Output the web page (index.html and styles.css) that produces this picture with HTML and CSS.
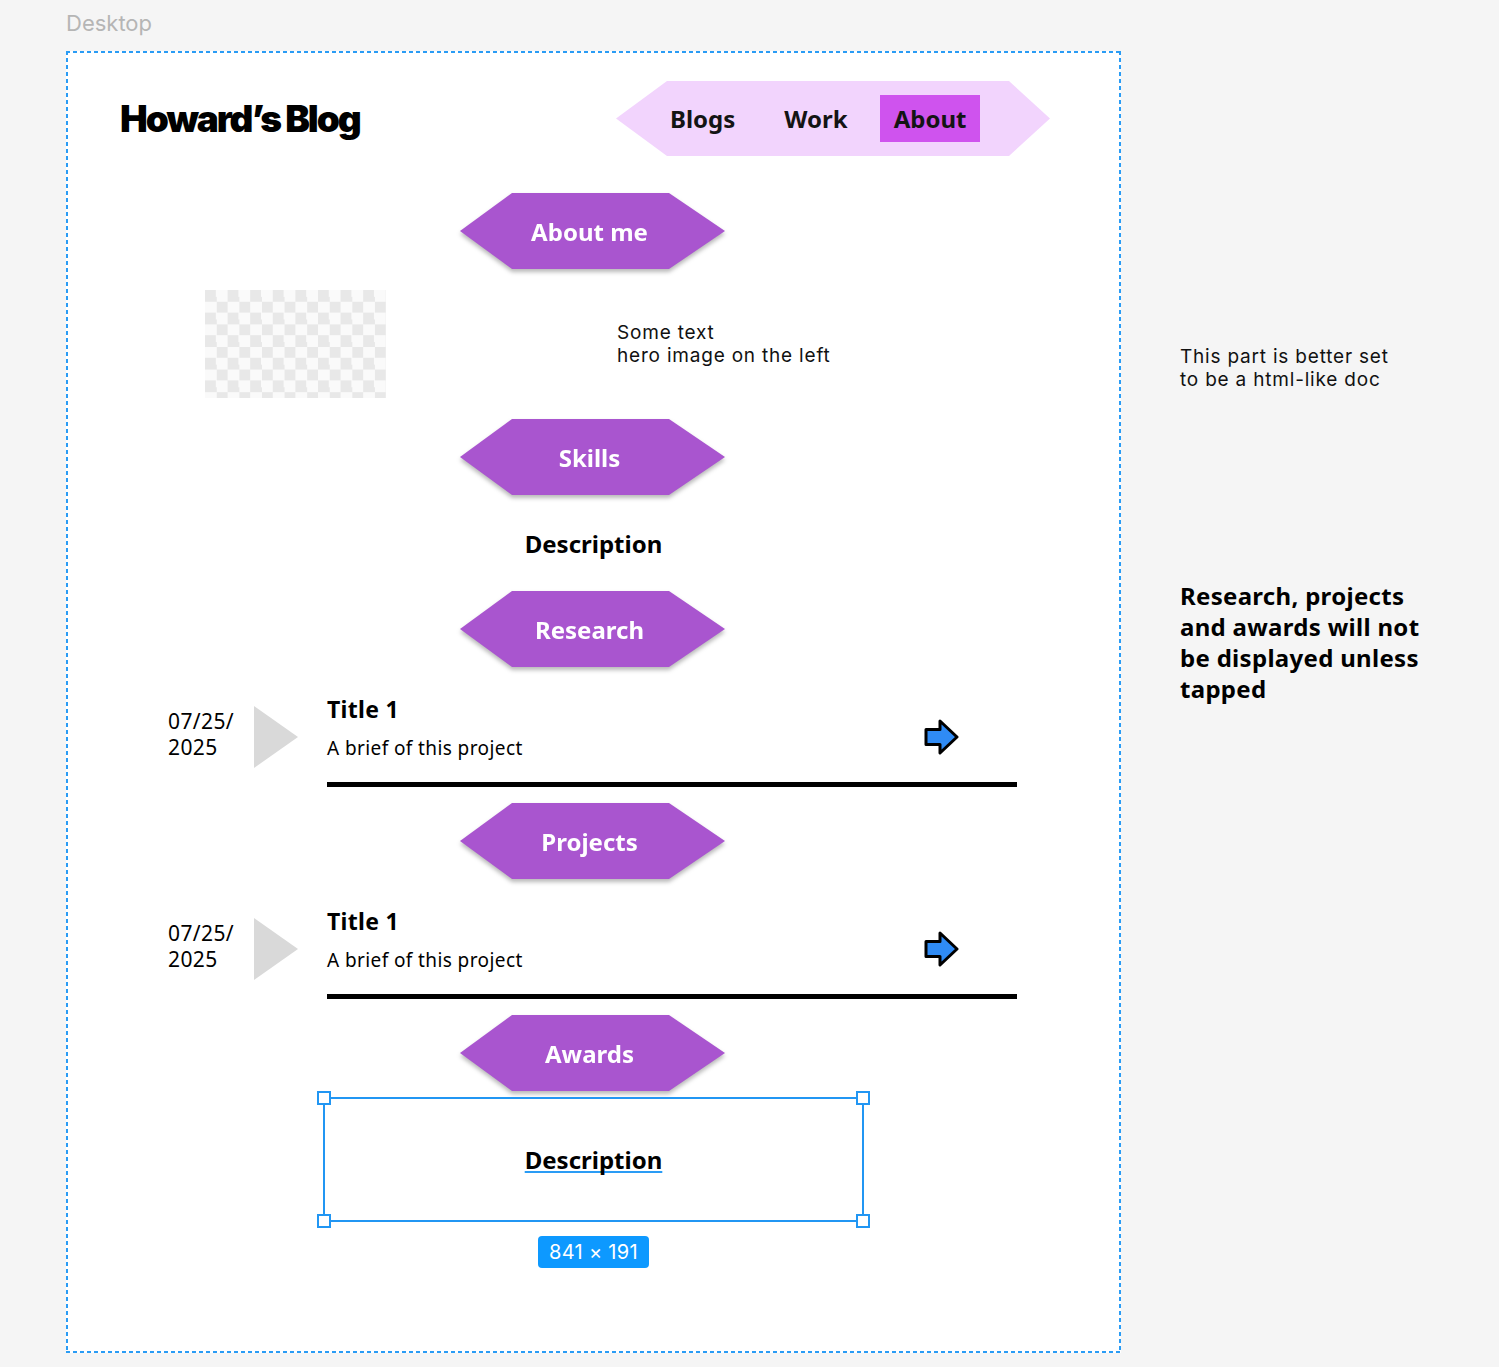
FILE: index.html
```html
<!DOCTYPE html>
<html lang="en">
<head>
<meta charset="utf-8">
<title>Howard's Blog – Desktop</title>
<link rel="stylesheet" href="styles.css">
</head>
<body>
<div class="canvas">
  <div class="label">Desktop</div>
  <div class="board">
    <div class="frame">
      <header class="header">
        <h1 class="logo">Howard’s Blog</h1>
        <nav class="nav">
          <span class="nav-item">Blogs</span>
          <span class="nav-item">Work</span>
          <span class="nav-item active">About</span>
        </nav>
      </header>

      <div class="hex-wrap first"><div class="hex">About me</div></div>

      <div class="hero">
        <div class="hero-img"></div>
        <p class="hero-text">Some text<br>hero image on the left</p>
      </div>

      <div class="hex-wrap after-hero"><div class="hex">Skills</div></div>

      <div class="desc">Description</div>

      <div class="hex-wrap after-desc"><div class="hex">Research</div></div>

      <div class="entry">
        <div class="date">07/25/<br>2025</div>
        <div class="tri"></div>
        <div class="entry-body">
          <div class="entry-top">
            <div class="entry-text">
              <div class="entry-title">Title 1</div>
              <div class="entry-brief">A brief of this project</div>
            </div>
            <svg class="arrow" viewBox="0 0 36 36" width="36" height="36" aria-hidden="true">
              <path d="M2 10.5 H16 V2 L33 18 L16 34 V25.5 H2 Z" fill="#2f8bf5" stroke="#000" stroke-width="3" stroke-linejoin="round"/>
            </svg>
          </div>
          <div class="rule"></div>
        </div>
      </div>

      <div class="hex-wrap after-entry"><div class="hex">Projects</div></div>

      <div class="entry">
        <div class="date">07/25/<br>2025</div>
        <div class="tri"></div>
        <div class="entry-body">
          <div class="entry-top">
            <div class="entry-text">
              <div class="entry-title">Title 1</div>
              <div class="entry-brief">A brief of this project</div>
            </div>
            <svg class="arrow" viewBox="0 0 36 36" width="36" height="36" aria-hidden="true">
              <path d="M2 10.5 H16 V2 L33 18 L16 34 V25.5 H2 Z" fill="#2f8bf5" stroke="#000" stroke-width="3" stroke-linejoin="round"/>
            </svg>
          </div>
          <div class="rule"></div>
        </div>
      </div>

      <div class="hex-wrap after-entry"><div class="hex">Awards</div></div>

      <div class="selection">
        <span class="sel-text">Description</span>
        <span class="handle tl"></span>
        <span class="handle tr"></span>
        <span class="handle bl"></span>
        <span class="handle br"></span>
      </div>
      <div class="badge">841 × 191</div>
    </div>

    <aside class="notes">
      <p class="note">This part is better set<br>to be a html-like doc</p>
      <p class="note-bold">Research, projects<br>and awards will not<br>be displayed unless<br>tapped</p>
    </aside>
  </div>
</div>
</body>
</html>
```

FILE: styles.css
```css
* { box-sizing: border-box; }

body {
  margin: 0;
  background: #f5f5f5;
  font-family: Inter, "Noto Sans", sans-serif;
  color: #111;
}

.canvas {
  padding: 10px 0 0 66px;
}

.label {
  font-size: 22px;
  line-height: 26px;
  color: #b5b5b5;
  margin-bottom: 15px;
}

.board {
  display: flex;
  align-items: flex-start;
  gap: 59px;
}

.frame {
  width: 1055px;
  height: 1302px;
  padding: 2px;
  display: flex;
  flex-direction: column;
  background:
    repeating-linear-gradient(90deg, #2a9cf5 0 4px, transparent 4px 7px) top / 100% 2px no-repeat,
    repeating-linear-gradient(90deg, #2a9cf5 0 4px, transparent 4px 7px) bottom / 100% 2px no-repeat,
    repeating-linear-gradient(180deg, #2a9cf5 0 4px, transparent 4px 7px) left / 2px 100% no-repeat,
    repeating-linear-gradient(180deg, #2a9cf5 0 4px, transparent 4px 7px) right / 2px 100% no-repeat,
    #ffffff;
}

/* header */
.header {
  display: flex;
  justify-content: space-between;
  align-items: center;
  padding: 28px 69px 0 52px;
}

.logo {
  margin: 0;
  font-family: Inter, sans-serif;
  font-weight: 900;
  font-size: 37px;
  letter-spacing: -0.055em;
  color: #000;
}

.nav {
  width: 434px;
  height: 75px;
  display: flex;
  align-items: center;
  padding-left: 54px;
  background: #f2d4fd;
  clip-path: polygon(0 50%, 51px 0, calc(100% - 41px) 0, 100% 50%, calc(100% - 41px) 100%, 51px 100%);
  font-family: "Noto Sans", sans-serif;
  font-weight: 700;
  font-size: 24px;
  color: #141414;
}

.nav-item + .nav-item {
  margin-left: 49px;
}

.nav-item.active {
  margin-left: 32px;
  height: 47px;
  line-height: 47px;
  padding: 0 14px;
  background: #cf53ee;
}

/* hexagon section buttons */
.hex-wrap {
  align-self: center;
  margin-right: 2px;
  filter: drop-shadow(0 3px 2px rgba(0, 0, 0, 0.28));
}

.hex-wrap.first { margin-top: 37px; }
.hex-wrap.after-hero { margin-top: 21px; }
.hex-wrap.after-desc { margin-top: 32px; }
.hex-wrap.after-entry { margin-top: 16px; }

.hex {
  width: 265px;
  height: 76px;
  display: flex;
  align-items: center;
  justify-content: center;
  padding-right: 6px;
  background: #a955cf;
  clip-path: polygon(0 50%, 52px 0, calc(100% - 56px) 0, 100% 50%, calc(100% - 56px) 100%, 52px 100%);
  color: #fff;
  font-family: "Noto Sans", sans-serif;
  font-weight: 700;
  font-size: 24px;
}

/* hero */
.hero {
  display: flex;
  align-items: center;
  margin-top: 21px;
  padding-left: 137px;
}

.hero-img {
  width: 181px;
  height: 108px;
  background: repeating-conic-gradient(#fafafa 0 25%, #e8e8e8 0 50%) 0 0 / 22.6px 22.6px;
}

.hero-text {
  margin: 0 0 0 231px;
  font-size: 19px;
  line-height: 23px;
  letter-spacing: 0.8px;
  color: #111;
}

.desc {
  margin-top: 34px;
  text-align: center;
  font-family: "Noto Sans", sans-serif;
  font-weight: 700;
  font-size: 24px;
  line-height: 30px;
  color: #000;
}

/* entries */
.entry {
  display: grid;
  grid-template-columns: 86px 73px 690px;
  align-items: start;
  margin-top: 28px;
  padding-left: 100px;
  font-family: "Noto Sans", sans-serif;
  color: #000;
}

.date {
  margin-top: 13px;
  font-size: 21px;
  line-height: 26px;
  letter-spacing: 0.4px;
}

.tri {
  margin-top: 11px;
  width: 44px;
  height: 62px;
  background: #d9d9d9;
  clip-path: polygon(0 0, 100% 50%, 0 100%);
}

.entry-top {
  display: flex;
  justify-content: space-between;
  align-items: flex-start;
}

.entry-title {
  font-weight: 700;
  font-size: 23px;
  line-height: 28px;
  letter-spacing: 0.3px;
}

.entry-brief {
  margin-top: 13px;
  font-size: 19px;
  line-height: 24px;
  letter-spacing: 0.4px;
}

.arrow {
  display: block;
  margin: 24px 57px 0 0;
}

.rule {
  height: 5px;
  margin-top: 22px;
  background: #000;
}

/* selection box */
.selection {
  position: relative;
  align-self: center;
  width: 541px;
  height: 125px;
  margin-top: 6px;
  border: 2px solid #2196f3;
  display: flex;
  align-items: center;
  justify-content: center;
}

.sel-text {
  font-family: "Noto Sans", sans-serif;
  font-weight: 700;
  font-size: 24px;
  color: #000;
  text-decoration: underline 2px #2a9cf5;
  text-decoration-skip-ink: none;
  text-underline-offset: 2px;
}

.handle {
  position: absolute;
  width: 14px;
  height: 14px;
  background: #fff;
  border: 2px solid #2196f3;
}

.handle.tl { left: -8px; top: -8px; }
.handle.tr { right: -8px; top: -8px; }
.handle.bl { left: -8px; bottom: -8px; }
.handle.br { right: -8px; bottom: -8px; }

.badge {
  align-self: center;
  margin-top: 14px;
  height: 32px;
  padding: 0 11px;
  line-height: 32px;
  border-radius: 4px;
  background: #0d99ff;
  color: #fff;
  font-size: 20px;
  letter-spacing: 0.3px;
}

/* side notes */
.notes {
  padding-top: 294px;
}

.note {
  margin: 0;
  font-size: 19px;
  line-height: 23px;
  letter-spacing: 0.8px;
  color: #111;
}

.note-bold {
  margin: 189px 0 0;
  font-family: "Noto Sans", sans-serif;
  font-weight: 700;
  font-size: 24px;
  line-height: 31px;
  letter-spacing: 0.3px;
  color: #000;
}
```
